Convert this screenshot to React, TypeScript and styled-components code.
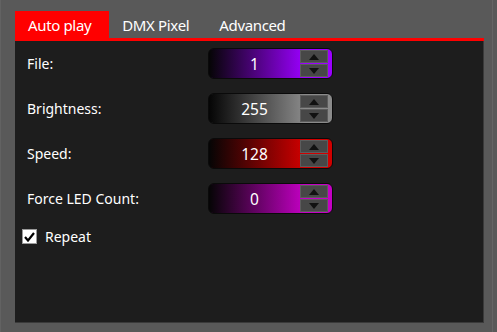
import styled, { createGlobalStyle } from "styled-components";

const GlobalStyle = createGlobalStyle`
  html, body {
    margin: 0;
    padding: 0;
    background: #595959;
  }
  body {
    font-family: "Noto Sans", "Open Sans", sans-serif;
  }
`;

const Window = styled.div`
  width: 497px;
  height: 332px;
  box-sizing: border-box;
  padding: 11px 14px 9px 14px;
  display: flex;
  flex-direction: column;
  background: #595959;
  border-left: 1px solid #626262;
  box-shadow: inset -4px 0 0 #595959, inset -5px 0 0 #656565;
`;

const TabBar = styled.div`
  display: flex;
  flex: none;
  width: 469px;
  height: 27px;
  border-bottom: 3px solid #ff0000;
`;

const Tab = styled.div<{ active?: boolean }>`
  display: flex;
  align-items: center;
  padding: 0 ${({ active }) => (active ? "18px" : "15px")} 0 13px;
  font-size: 15px;
  letter-spacing: -0.35px;
  color: #ffffff;
  background: ${({ active }) => (active ? "#ff0000" : "transparent")};
  margin-right: ${({ active }) => (active ? "0" : "2px")};
`;

const Panel = styled.div`
  flex: 1;
  min-height: 0;
  width: 469px;
  box-sizing: border-box;
  background: #1d1d1d;
  border-right: 1px solid #3a3a3a;
  border-bottom: 1px solid #3a3a3a;
  padding: 7px 0 0 12px;
  display: flex;
  flex-direction: column;
  gap: 14px;
`;

const Row = styled.div`
  display: grid;
  grid-template-columns: 181px 125px;
  align-items: center;
  height: 31px;
`;

const Label = styled.span`
  font-size: 14px;
  color: #ffffff;
`;

const Spinner = styled.div<{ color: string }>`
  display: flex;
  align-items: center;
  height: 31px;
  box-sizing: border-box;
  border-radius: 6px;
  border: 1px solid #0a0a0a;
  background: linear-gradient(to right, #050505 0%, ${({ color }) => color} 78%);
  box-shadow: inset -1px 0 0 ${({ color }) => color};
  padding-right: 4px;
`;

const Value = styled.span`
  flex: 1;
  text-align: center;
  font-size: 15.5px;
  color: #ffffff;
`;

const SpinButtons = styled.div`
  display: flex;
  flex-direction: column;
  width: 28px;
`;

const SpinButton = styled.div`
  height: 13px;
  box-sizing: border-box;
  background: #474747;
  border: 1px solid #5c5c5c;
  display: flex;
  align-items: center;
  justify-content: center;
  & + & {
    margin-top: 1px;
  }
`;

const CheckRow = styled.div`
  display: flex;
  align-items: center;
  gap: 8px;
  margin-left: -5px;
  margin-top: -1px;
`;

const CheckBox = styled.div`
  width: 15px;
  height: 15px;
  box-sizing: border-box;
  background: #ffffff;
  border: 1px solid #9a9a9a;
  display: flex;
  align-items: center;
  justify-content: center;
`;

const Arrow = ({ down }: { down?: boolean }) => (
  <svg width="10" height="6" viewBox="0 0 10 6">
    <path d={down ? "M0 0 L10 0 L5 6 Z" : "M0 6 L10 6 L5 0 Z"} fill="#111" />
  </svg>
);

const NumberField = ({ label, value, color }: { label: string; value: number; color: string }) => (
  <Row>
    <Label>{label}</Label>
    <Spinner color={color}>
      <Value>{value}</Value>
      <SpinButtons>
        <SpinButton>
          <Arrow />
        </SpinButton>
        <SpinButton>
          <Arrow down />
        </SpinButton>
      </SpinButtons>
    </Spinner>
  </Row>
);

export default function App() {
  return (
    <>
      <GlobalStyle />
      <Window>
        <TabBar>
          <Tab active>Auto play</Tab>
          <Tab>DMX Pixel</Tab>
          <Tab>Advanced</Tab>
        </TabBar>
        <Panel>
          <NumberField label="File:" value={1} color="#9b00ff" />
          <NumberField label="Brightness:" value={255} color="#8a8a8a" />
          <NumberField label="Speed:" value={128} color="#d00000" />
          <NumberField label="Force LED Count:" value={0} color="#c400c4" />
          <CheckRow>
            <CheckBox>
              <svg width="11" height="10" viewBox="0 0 11 10">
                <path d="M1 5 L4 8.5 L10 1" stroke="#000" strokeWidth="2.2" fill="none" />
              </svg>
            </CheckBox>
            <Label>Repeat</Label>
          </CheckRow>
        </Panel>
      </Window>
    </>
  );
}
